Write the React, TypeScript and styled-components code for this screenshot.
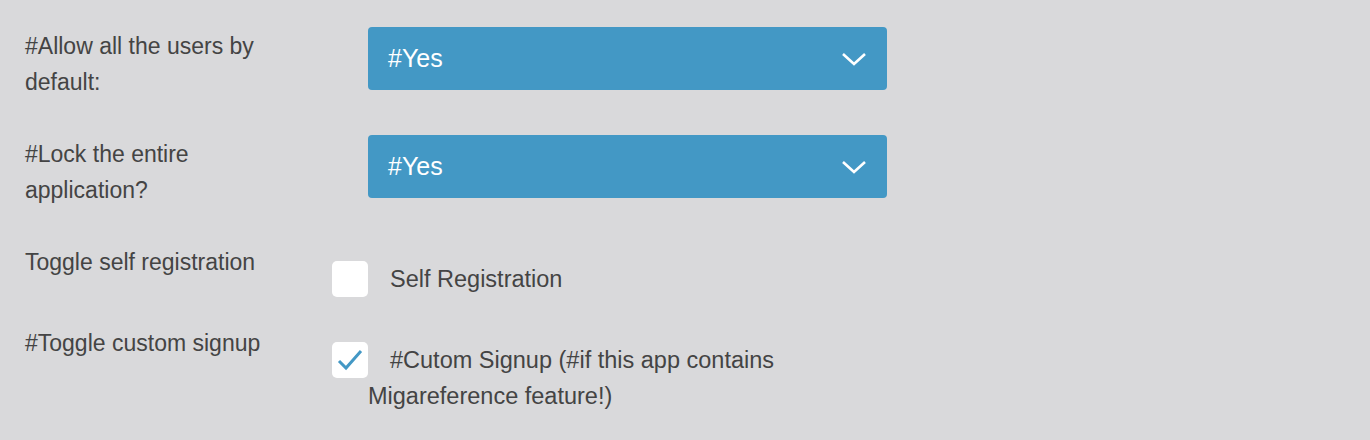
import React, { useState } from 'react';
import styled, { createGlobalStyle } from 'styled-components';

const GlobalStyle = createGlobalStyle`
  html, body {
    margin: 0;
    padding: 0;
    background: #d9d9db;
  }
  body {
    font-family: "Liberation Sans", Arial, sans-serif;
    color: #333;
  }
`;

const Form = styled.div`
  display: flex;
  flex-direction: column;
  padding: 27px 0 0 25px;
`;

const Row = styled.div<{ $height: number }>`
  display: grid;
  grid-template-columns: 343px 519px;
  height: ${(p) => p.$height}px;
`;

const Label = styled.div`
  padding-top: 1px;
  padding-right: 70px;
  font-size: 23px;
  line-height: 36px;
  color: #444;
`;

const SelectBox = styled.div`
  position: relative;
  height: 63px;
  border-radius: 4px;
  background: #4398c5;
  color: #fff;
  display: flex;
  align-items: center;
  padding: 0 20px;
  font-size: 25px;
  cursor: pointer;
`;

const Chevron = styled.svg`
  position: absolute;
  right: 20px;
  top: 25px;
`;

const CheckCell = styled.div`
  padding-top: 18px;
`;

const CheckLabel = styled.label`
  display: block;
  text-indent: -36px;
  font-size: 23.5px;
  line-height: 36px;
  color: #444;
  cursor: pointer;
`;

const Box = styled.span`
  display: inline-flex;
  align-items: center;
  justify-content: center;
  width: 36px;
  height: 36px;
  margin-right: 22px;
  vertical-align: top;
  text-indent: 0;
  border-radius: 5px;
  background: #fff;
`;

function Select({ value }: { value: string }) {
  return (
    <SelectBox>
      {value}
      <Chevron width="26" height="14" viewBox="0 0 26 14">
        <path d="M2 2 L13 12 L24 2" fill="none" stroke="#fff" strokeWidth="2.6" />
      </Chevron>
    </SelectBox>
  );
}

function Check({ checked, text, onToggle }: { checked: boolean; text: string; onToggle: () => void }) {
  return (
    <CheckLabel onClick={onToggle}>
      <Box>
        {checked && (
          <svg width="28" height="28" viewBox="0 0 28 28">
            <path d="M3 15 L10 22 L25 5" fill="none" stroke="#4398c5" strokeWidth="3" />
          </svg>
        )}
      </Box>
      {text}
    </CheckLabel>
  );
}

export default function App() {
  const [selfReg, setSelfReg] = useState(false);
  const [custom, setCustom] = useState(true);

  return (
    <>
      <GlobalStyle />
      <Form>
        <Row $height={108}>
          <Label>#Allow all the users by default:</Label>
          <Select value="#Yes" />
        </Row>
        <Row $height={108}>
          <Label>#Lock the entire application?</Label>
          <Select value="#Yes" />
        </Row>
        <Row $height={81}>
          <Label>Toggle self registration</Label>
          <CheckCell>
            <Check checked={selfReg} text="Self Registration" onToggle={() => setSelfReg(!selfReg)} />
          </CheckCell>
        </Row>
        <Row $height={100}>
          <Label>#Toggle custom signup</Label>
          <CheckCell>
            <Check
              checked={custom}
              text="#Cutom Signup (#if this app contains Migareference feature!)"
              onToggle={() => setCustom(!custom)}
            />
          </CheckCell>
        </Row>
      </Form>
    </>
  );
}
